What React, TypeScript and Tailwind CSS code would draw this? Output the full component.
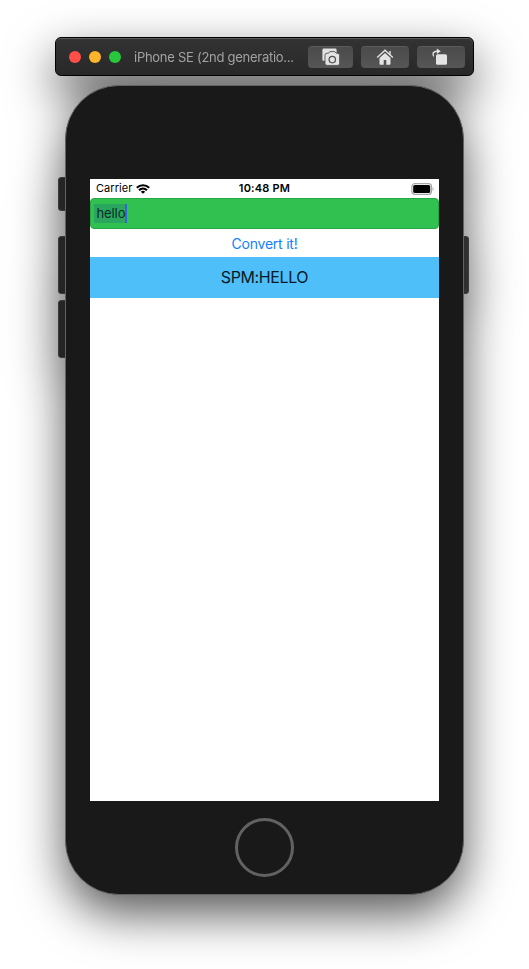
import React from "react";

const toolButton =
  "flex h-[22px] items-center justify-center rounded-[4px] bg-gradient-to-b from-[#4b4b4b] to-[#565656] border-t border-[#5a5a5a]";

function TitleBar() {
  return (
    <header className="flex h-[39px] w-[419px] items-center rounded-[6px] border border-black bg-gradient-to-b from-[#333333] to-[#282828] pl-[13px] pr-[8px] shadow-[inset_0_1px_0_#5c5c5c]">
      <div className="flex gap-[8px]">
        <span className="size-3 rounded-full bg-[#ff4f48]" />
        <span className="size-3 rounded-full bg-[#fdb52b]" />
        <span className="size-3 rounded-full bg-[#27c83c]" />
      </div>
      <span className="ml-[13px] w-[174px] whitespace-nowrap text-[13px] leading-5 tracking-[-0.27px] text-[#a2a2a2]">
        iPhone SE (2nd generatio...
      </span>
      <div className="flex gap-2">
        <button aria-label="Screenshot" className={toolButton + " w-[45px]"}>
          <svg width="18" height="18" viewBox="0 0 18 18">
            <path d="M1.8.4h11.4a1.4 1.4 0 0 1 1.4 1.4V6H4v6.8H1.2A.8.8 0 0 1 .4 12V1.8A1.4 1.4 0 0 1 1.8.4z" fill="#e2e2e2" />
            <path d="M3 7.2a2 2 0 0 1 2-2h1.6l1.2-1.6h5l1.2 1.6h1.6a2 2 0 0 1 2 2v8.2a2 2 0 0 1-2 2H5a2 2 0 0 1-2-2z" fill="#e4e4e4" stroke="#505050" strokeWidth="0.9" />
            <circle cx="10.3" cy="11.6" r="3.2" fill="#e4e4e4" stroke="#555" strokeWidth="1.3" />
          </svg>
        </button>
        <button aria-label="Home" className={toolButton + " w-[48px]"}>
          <svg width="18" height="17" viewBox="0 0 18 17">
            <path d="M1.2 8.6 9 1.2l7.8 7.4M14 5.5V2" fill="none" stroke="#e4e4e4" strokeWidth="1.4" />
            <path d="M9 3.9 3.5 9v5.7a1 1 0 0 0 1 1h3.2v-4.7h2.6v4.7h3.2a1 1 0 0 0 1-1V9z" fill="#e4e4e4" />
          </svg>
        </button>
        <button aria-label="Rotate" className={toolButton + " w-[48px]"}>
          <svg width="18" height="18" viewBox="0 0 18 18" className="relative -left-px">
            <rect x="5" y="6.2" width="11" height="10.6" rx="1.6" fill="#e4e4e4" />
            <path d="M2.7 8.4C.8 5.6 2.6 3.2 6 3.2" fill="none" stroke="#e4e4e4" strokeWidth="1.4" />
            <path d="m5.8.4 4 2.9-4 2.8z" fill="#e4e4e4" />
          </svg>
        </button>
      </div>
    </header>
  );
}

function StatusBar() {
  return (
    <div className="grid h-[19px] grid-cols-3 items-center pl-[6px] pr-[5px] text-[11px] leading-[19px] text-black">
      <div className="flex items-center gap-[4px]">
        <span className="tracking-[0.05px]">Carrier</span>
        <svg width="14" height="10" viewBox="0 0 14 10" fill="none" stroke="#000" strokeWidth="2.1">
          <path d="M.8 3.7a9 9 0 0 1 12.4 0M3 6.2a5.8 5.8 0 0 1 8 0" />
          <path d="M7 9.8 4.8 7.7a3.2 3.2 0 0 1 4.4 0z" fill="#000" stroke="none" />
        </svg>
      </div>
      <span className="-ml-px whitespace-nowrap text-center font-semibold tracking-[0.2px]">10:48 PM</span>
      <svg width="23" height="12" viewBox="0 0 23 12" className="justify-self-end">
        <rect x=".9" y=".7" width="19.6" height="10.6" rx="3" fill="#fff" stroke="#a5a5a5" strokeWidth="1.2" />
        <rect x="2.2" y="2" width="17" height="8" rx="1.6" fill="#000" />
        <path d="M21.7 4.2c1.2.8 1.2 2.8 0 3.6z" fill="#999" />
      </svg>
    </div>
  );
}

function Screen() {
  return (
    <main className="mx-auto h-[622px] w-[349px] bg-white">
      <StatusBar />
      <div className="flex h-[31px] items-start rounded-[4px] border border-[#27a844] bg-[#30c151] pl-[3px] pt-[5px]">
        <span className="h-[19px] w-[33px] border-r-2 border-[#3a62d8] bg-[#2ba65e] pl-[2.5px] text-[13px] leading-[19px] tracking-[-0.1px] text-[#0b2a25]">
          hello
        </span>
      </div>
      <button className="block h-[28px] w-full text-center text-[14px] leading-[29px] tracking-[-0.22px] text-[#1480fb]">
        Convert it!
      </button>
      <div className="h-[41px] bg-[#4ebff9] text-center text-[16px] leading-[41px] tracking-[-0.4px] text-[#071a25]">
        SPM:HELLO
      </div>
    </main>
  );
}

export default function App() {
  return (
    <div className="h-[969px] w-[529px] overflow-hidden bg-white font-['Inter','Liberation_Sans',sans-serif]">
      <div className="flex flex-col items-center pt-[37px] drop-shadow-[0_19px_24px_rgba(0,0,0,0.66)]">
        <TitleBar />
        <div className="relative mt-[9px] h-[810px] w-[399px]">
          <span className="absolute -left-[7px] top-[92px] h-[34px] w-[10px] rounded-[3px] border border-[#3c3c3c] bg-[#252525]" />
          <span className="absolute -left-[7px] top-[151px] h-[58px] w-[10px] rounded-[3px] border border-[#3c3c3c] bg-[#252525]" />
          <span className="absolute -left-[7px] top-[215px] h-[58px] w-[10px] rounded-[3px] border border-[#3c3c3c] bg-[#252525]" />
          <span className="absolute -right-[5px] top-[151px] h-[58px] w-[10px] rounded-[3px] border border-[#3c3c3c] bg-[#303030]" />
          <div className="relative h-full rounded-[54px] border border-[#626262] bg-[#191919] pt-[93px]">
            <Screen />
            <div className="ml-[168.5px] mt-[17px] size-[59px] rounded-full border-[3px] border-[#626262]" />
          </div>
        </div>
      </div>
    </div>
  );
}
